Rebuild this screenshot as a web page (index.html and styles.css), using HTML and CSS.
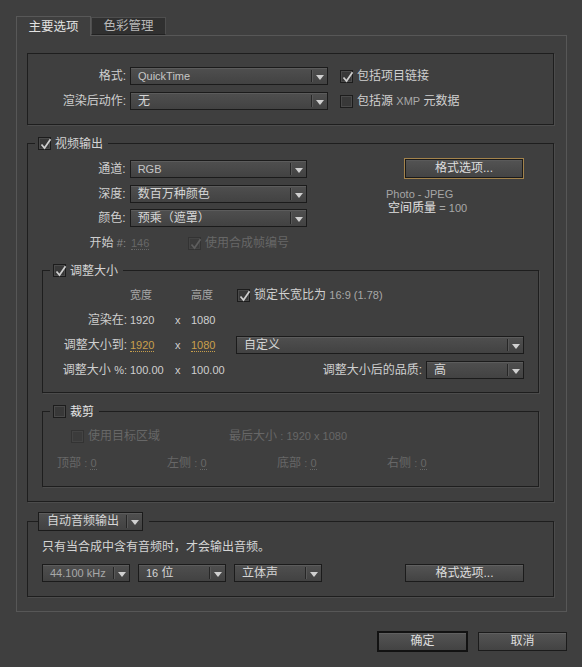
FILE: index.html
```html
<!DOCTYPE html>
<html lang="zh-CN">
<head>
<meta charset="utf-8">
<title>输出模块设置</title>
<link rel="stylesheet" href="styles.css">
</head>
<body>
<div class="dialog">
  <div class="tabs">
    <div class="tab active">主要选项</div>
    <div class="tab">色彩管理</div>
  </div>
  <div class="panel">
    <div class="box fmt">
      <div class="row">
        <span class="lbl l98">格式:</span>
        <div class="dd w198"><span class="val en">QuickTime</span><span class="arr"></span></div>
        <span class="cb on ml12"><svg viewBox="0 0 13 13"><path d="M2.5 6.5 L5.5 10 L11.5 1.2"/></svg></span>
        <span class="ctext">包括项目链接</span>
      </div>
      <div class="row mt7">
        <span class="lbl l98">渲染后动作:</span>
        <div class="dd w198"><span class="val">无</span><span class="arr"></span></div>
        <span class="cb ml12"></span>
        <span class="ctext">包括源 <span class="en gray">XMP</span> 元数据</span>
      </div>
    </div>

    <fieldset class="fs video">
      <legend class="lg lg-video"><span class="cb on"><svg viewBox="0 0 13 13"><path d="M2.5 6.5 L5.5 10 L11.5 1.2"/></svg></span><span>视频输出</span></legend>
      <div class="vtop">
        <div class="vleft">
          <div class="row">
            <span class="lbl l84">通道:</span>
            <div class="dd w178"><span class="val en">RGB</span><span class="arr"></span></div>
          </div>
          <div class="row mt7">
            <span class="lbl l84">深度:</span>
            <div class="dd w178"><span class="val">数百万种颜色</span><span class="arr"></span></div>
          </div>
          <div class="row mt6">
            <span class="lbl l84">颜色:</span>
            <div class="dd w178"><span class="val">预乘（遮罩）</span><span class="arr"></span></div>
          </div>
          <div class="row mt7">
            <span class="lbl l84">开始 <span class="en dim2">#:</span></span>
            <span class="startnum"><span class="en dis ul">146</span></span>
            <span class="cb on disabled"><svg viewBox="0 0 13 13"><path d="M2.5 6.5 L5.5 10 L11.5 1.2"/></svg></span>
            <span class="ctext dis">使用合成帧编号</span>
          </div>
        </div>
        <div class="vright">
          <div class="btn gold w120">格式选项...</div>
          <div class="info1 en">Photo - JPEG</div>
          <div class="info2">空间质量 <span class="en gray">= 100</span></div>
        </div>
      </div>

      <fieldset class="fs inner resize">
        <legend class="lg lg-inner"><span class="cb on"><svg viewBox="0 0 13 13"><path d="M2.5 6.5 L5.5 10 L11.5 1.2"/></svg></span><span>调整大小</span></legend>
        <div class="rgrid">
          <span></span>
          <span class="hdr">宽度</span>
          <span></span>
          <span class="hdr">高度</span>
          <span class="rest"><span class="cb on ml1"><svg viewBox="0 0 13 13"><path d="M2.5 6.5 L5.5 10 L11.5 1.2"/></svg></span><span class="ctext">锁定长宽比为 <span class="en gray">16:9 (1.78)</span></span></span>

          <span class="rl">渲染在:</span>
          <span class="en">1920</span>
          <span class="en">x</span>
          <span class="en">1080</span>
          <span></span>

          <span class="rl">调整大小到:</span>
          <span><span class="en orange ul">1920</span></span>
          <span class="en">x</span>
          <span><span class="en orange ul">1080</span></span>
          <div class="dd wfull"><span class="val">自定义</span><span class="arr"></span></div>

          <span class="rl">调整大小 <span class="en">%:</span></span>
          <span class="en">100.00</span>
          <span class="en">x</span>
          <span class="en">100.00</span>
          <span class="rest end"><span class="lbl2">调整大小后的品质:</span><div class="dd w98"><span class="val">高</span><span class="arr"></span></div></span>
        </div>
      </fieldset>

      <fieldset class="fs inner crop">
        <legend class="lg lg-inner"><span class="cb"></span><span class="bright">裁剪</span></legend>
        <div class="row croprow1">
          <span class="cropfirst"><span class="cb disabled"></span><span class="ctext dis">使用目标区域</span></span>
          <span class="dis">最后大小 <span class="en">: 1920 x 1080</span></span>
        </div>
        <div class="row croprow2 mt9">
          <span class="side dis">顶部 <span class="en">: <span class="ul">0</span></span></span>
          <span class="side dis">左侧 <span class="en">: <span class="ul">0</span></span></span>
          <span class="side dis">底部 <span class="en">: <span class="ul">0</span></span></span>
          <span class="side dis">右侧 <span class="en">: <span class="ul">0</span></span></span>
        </div>
      </fieldset>
    </fieldset>

    <fieldset class="fs audio">
      <legend class="lg lg-audio"><div class="dd w105"><span class="val vpad8">自动音频输出</span><span class="arr"></span></div></legend>
      <div class="atext">只有当合成中含有音频时，才会输出音频。</div>
      <div class="row arow">
        <div class="dd w88"><span class="val en gray">44.100 kHz</span><span class="arr"></span></div>
        <div class="dd w88"><span class="val"><span class="en">16</span> 位</span><span class="arr"></span></div>
        <div class="dd w88"><span class="val">立体声</span><span class="arr"></span></div>
        <div class="btn w119 push">格式选项...</div>
      </div>
    </fieldset>
  </div>

  <div class="actions">
    <div class="btn default">确定</div>
    <div class="btn cancel">取消</div>
  </div>
</div>
</body>
</html>
```

FILE: styles.css
```css
* { box-sizing: border-box; }
html, body { margin: 0; padding: 0; }
body {
  width: 582px;
  height: 667px;
  overflow: hidden;
  background: #3f3f3f;
  color: #cdcdcd;
  font-family: "Liberation Sans", "Noto Sans CJK SC", sans-serif;
  font-size: 12px;
  line-height: 14px;
}
.dialog { padding: 16px 0 0 16px; }

/* tabs */
.tabs { display: flex; height: 19px; position: relative; z-index: 1; }
.tab {
  width: 75px;
  height: 18px;
  margin-top: 1px;
  background: #303030;
  border: 1px solid #4e4e4e;
  border-bottom-color: #222;
  color: #b8b8b8;
  text-align: center;
  font-size: 12.5px;
  line-height: 16px;
}
.tab.active {
  height: 20px;
  margin-top: 0;
  background: #3f3f3f;
  border-color: #585858;
  border-bottom: none;
  color: #e2e2e2;
  line-height: 19px;
  padding-top: 1px;
}

/* panel */
.panel {
  width: 551px;
  border: 1px solid #575757;
  padding: 17px 12px 14px 10px;
}

.box {
  border: 1px solid #1e1e1e;
  box-shadow: 1px 1px 0 #4c4c4c;
}
.fmt { padding: 13px 0 14px 0; }

.row { display: flex; align-items: center; height: 18px; }
.mt6 { margin-top: 6px; }
.mt7 { margin-top: 7px; }
.mt9 { margin-top: 9px; }
.ml12 { margin-left: 12px; }
.ml1 { margin-left: 1px; }

.lbl { text-align: right; margin-right: 4px; color: #cfcfcf; white-space: nowrap; }
.l98 { width: 98px; }
.l84 { width: 84px; }

.en { font-size: 11px; }
.gray { color: #a8a8a8; }
.dim2 { color: #8a8a8a; }
.dis { color: #676767; }
.bright { color: #e4e4e4; }
.orange { color: #c9a04c; }
.ul { border-bottom: 1px dotted currentColor; line-height: 12px; display: inline-block; }

/* dropdown */
.dd {
  display: flex;
  align-items: stretch;
  height: 18px;
  border: 1px solid #1b1b1b;
  background: linear-gradient(#4f4f4f, #424242);
  box-shadow: inset 0 1px 0 #5c5c5c;
  color: #d6d6d6;
}
.dd .val {
  flex: 1;
  padding-left: 7px;
  line-height: 16px;
  white-space: nowrap;
  overflow: hidden;
}
.dd .val.en { font-size: 11px; color: #c6c6c6; }
.dd .val.gray { color: #a8a8a8; }
.vpad8 { padding-left: 8px !important; }
.dd .arr {
  width: 16px;
  position: relative;
  border-left: 1px solid #262626;
  box-shadow: inset 1px 0 0 #585858;
  margin: 2px 0;
}
.dd .arr::after {
  content: "";
  position: absolute;
  left: 4px;
  top: 5px;
  border-left: 4px solid transparent;
  border-right: 4px solid transparent;
  border-top: 5px solid #d0d0d0;
}
.w198 { width: 198px; }
.w178 { width: 178px; }
.w98 { width: 98px; }
.w88 { width: 88px; }
.w105 { width: 105px; }
.wfull { width: 288px; }

/* checkbox */
.cb {
  flex: none;
  width: 13px;
  height: 13px;
  border: 1px solid #1c1c1c;
  background: #383838;
  box-shadow: inset 0 0 0 1px #4a4a4a;
  position: relative;
  display: inline-block;
}
.cb svg {
  position: absolute;
  left: 0;
  top: 0;
  width: 13px;
  height: 13px;
  overflow: visible;
}
.cb svg path { fill: none; stroke: #cfcfcf; stroke-width: 1.7; }
.cb.disabled { border-color: #333; background: #3b3b3b; box-shadow: inset 0 0 0 1px #444; }
.cb.disabled svg path { stroke: #5e5e5e; }
.ctext { margin-left: 4px; white-space: nowrap; color: #d0d0d0; }
.ctext.dis { color: #676767; }

/* fieldsets */
.fs {
  margin: 0;
  min-width: 0;
  border: 1px solid #1e1e1e;
  box-shadow: 1px 1px 0 #4c4c4c;
}
.lg {
  display: flex;
  align-items: center;
  height: 15px;
  color: #d4d4d4;
}
.lg .cb { margin-right: 4px; }
.video { margin-top: 11px; padding: 9px 14px 14px 14px; }
.lg-video { margin-left: -7px; padding: 0 5px 0 3px; }

.vtop { display: flex; }
.vleft { width: 265px; }
.startnum { width: 58px; padding-left: 1px; }
.vright { margin-left: auto; margin-right: 15px; width: 138px; margin-top: -2px; }

.btn {
  height: 19px;
  border: 1px solid #1b1b1b;
  background: linear-gradient(#545454, #434343);
  box-shadow: inset 0 1px 0 #606060;
  text-align: center;
  line-height: 17px;
  color: #dedede;
}
.btn.gold {
  height: 21px;
  margin-left: 18px;
  border-color: #a3834c;
  box-shadow: inset 0 0 0 1px #1a1a1a, inset 0 2px 0 #5a5a5a;
  line-height: 19px;
}
.w120 { width: 120px; }
.w119 { width: 119px; }
.info1 { margin-top: 9px; line-height: 13px; color: #a6a6a6; }
.info2 { padding-left: 2px; line-height: 14px; color: #e0e0e0; }

.inner { margin-top: 11px; padding: 8px 14px 13px 0; }
.lg-inner { margin-left: 7px; padding: 0 5px 0 3px; }
.crop { padding-bottom: 14px; }

.rgrid {
  display: grid;
  grid-template-columns: 87px 45px 16px 45px 288px;
  grid-auto-rows: 18px;
  row-gap: 7px;
  align-items: center;
  color: #cfcfcf;
}
.rl { text-align: right; padding-right: 3px; white-space: nowrap; }
.hdr { font-size: 11px; color: #a6a6a6; }
.rest { display: flex; align-items: center; }
.rest.end { justify-content: flex-end; }
.lbl2 { margin-right: 4px; white-space: nowrap; }

.croprow1 { padding-left: 28px; }
.cropfirst { display: flex; align-items: center; width: 158px; }
.croprow2 { padding-left: 14px; }
.side { width: 110px; white-space: nowrap; }

.audio { margin-top: 10px; padding: 9px 14px 14px 14px; }
.lg-audio { height: 19px; margin-left: -4px; padding: 0 6px 0 0; }
.lg-audio .dd { height: 19px; }
.lg-audio .dd .val { line-height: 17px; }
.atext { line-height: 14px; color: #d4d4d4; }
.arow { margin-top: 10px; gap: 8px; }
.push { margin-left: auto; margin-right: 15px; height: 18px; line-height: 16px; }

.actions {
  width: 551px;
  margin-top: 19px;
  display: flex;
  justify-content: flex-end;
  align-items: flex-start;
}
.btn.default {
  width: 91px;
  height: 21px;
  border: 2px solid #121212;
  line-height: 17px;
}
.btn.cancel {
  width: 89px;
  height: 19px;
  margin-top: 1px;
  margin-left: 10px;
}
```
